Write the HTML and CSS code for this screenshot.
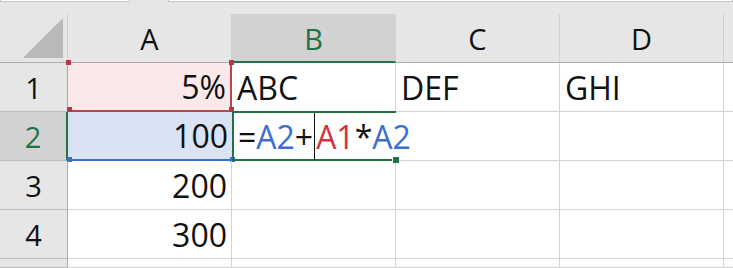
FILE: index.html
```html
<!DOCTYPE html>
<html lang="en">
<head>
    <meta charset="UTF-8">
    <title>sheet</title>
    <link rel="stylesheet" href="styles.css">
</head>
<body>

<div class="topbar">
    <div class="namebox"></div>
    <div class="formulabox"></div>
</div>

<div class="sheet">
    <!-- header row -->
    <div class="corner"><span class="tri"></span></div>
    <div class="colhead">A</div>
    <div class="colhead sel">B</div>
    <div class="colhead">C</div>
    <div class="colhead">D</div>
    <div class="colhead last"></div>

    <!-- row 1 -->
    <div class="rowhead">1</div>
    <div class="cell num ref-red">5%</div>
    <div class="cell">ABC</div>
    <div class="cell">DEF</div>
    <div class="cell">GHI</div>
    <div class="cell"></div>

    <!-- row 2 -->
    <div class="rowhead sel">2</div>
    <div class="cell num ref-blue">100</div>
    <div class="cell active"><span>=</span><span class="blue">A2</span><span>+</span><i class="caret"></i><span class="red">A1</span><span>*</span><span class="blue">A2</span></div>
    <div class="cell"></div>
    <div class="cell"></div>
    <div class="cell"></div>

    <!-- row 3 -->
    <div class="rowhead">3</div>
    <div class="cell num">200</div>
    <div class="cell"></div>
    <div class="cell"></div>
    <div class="cell"></div>
    <div class="cell"></div>

    <!-- row 4 -->
    <div class="rowhead">4</div>
    <div class="cell num">300</div>
    <div class="cell"></div>
    <div class="cell"></div>
    <div class="cell"></div>
    <div class="cell"></div>

    <!-- row 5 (cut off) -->
    <div class="rowhead"></div>
    <div class="cell"></div>
    <div class="cell"></div>
    <div class="cell"></div>
    <div class="cell"></div>
    <div class="cell"></div>
</div>

</body>
</html>
```

FILE: styles.css
```css
* {
    box-sizing: border-box;
}

body {
    margin: 0;
    height: 268px;
    background: #fff;
    font-family: "Open Sans", "Noto Sans", sans-serif;
    font-size: 32px;
    color: #111;
    overflow: hidden;
}

.topbar {
    height: 14px;
    background: #e6e6e6;
    display: flex;
    gap: 38px;
}

.topbar .namebox,
.topbar .formulabox {
    height: 2px;
    background: #fff;
    border: 1px solid #c6c6c6;
    border-top: 0;
}

.topbar .namebox {
    width: 130px;
}

.topbar .formulabox {
    flex: 1;
}

.sheet {
    display: grid;
    grid-template-columns: 68px 164px 164px 164px 164px 1fr;
    grid-template-rows: 49px 49px 49px 49px 49px 9px;
}

.corner {
    background: #e6e6e6;
    border-bottom: 1px solid #ababab;
    border-right: 1px solid #d0d0d0;
    position: relative;
}

.corner .tri {
    position: absolute;
    right: 4px;
    bottom: 4px;
    width: 0;
    height: 0;
    border-style: solid;
    border-width: 0 0 40px 40px;
    border-color: transparent transparent #b9b9b9 transparent;
}

.colhead,
.rowhead {
    font-size: 29px;
    background: #e6e6e6;
    display: flex;
    align-items: center;
    justify-content: center;
}

.colhead {
    border-bottom: 1px solid #ababab;
    border-right: 1px solid #d0d0d0;
    padding-top: 1px;
}

.colhead.sel {
    background: #d2d2d2;
    color: #217346;
    border-bottom: 2px solid #217346;
}

.colhead.last {
    border-right: 0;
}

.rowhead {
    border-bottom: 1px solid #bdbdbd;
    border-right: 1px solid #ababab;
}

.rowhead.sel {
    background: #d2d2d2;
    color: #217346;
    border-right: 2px solid #217346;
}

.cell {
    border-bottom: 1px solid #d4d4d4;
    border-right: 1px solid #d4d4d4;
    display: flex;
    align-items: center;
    padding: 0 5px;
    white-space: nowrap;
    position: relative;
}

.cell.num {
    justify-content: flex-end;
    padding-right: 4px;
}

.ref-red {
    background: #fbe9e9;
    border-bottom: 2px solid #b5474f;
    border-right: 2px solid #b5474f;
}

.ref-red::before,
.ref-red::after {
    content: "";
    position: absolute;
    width: 5px;
    height: 5px;
    background: #b5374a;
}

.ref-red::before {
    left: -2px;
    top: -3px;
}

.ref-red::after {
    right: -4px;
    top: -3px;
    box-shadow: 0 47px 0 #b5374a, -162px 47px 0 #b5374a;
}

.ref-blue {
    background: #d9e3f3;
    border-bottom: 2px solid #3a6fcf;
    border-right: 0;
}

.ref-blue::before,
.ref-blue::after {
    content: "";
    position: absolute;
    width: 5px;
    height: 5px;
    background: #3a6fcf;
    bottom: -3px;
}

.ref-blue::before {
    left: -1px;
}

.ref-blue::after {
    right: -3px;
}

/* cell in edit mode: text runs over into C2, so no right edge */
.active {
    border: 2px solid #217346;
    border-right: 0;
    margin-top: -1px;
    padding-left: 4px;
    z-index: 1;
}

.active::after {
    content: "";
    position: absolute;
    right: -3px;
    bottom: -4px;
    width: 6px;
    height: 6px;
    background: #217346;
    border: 1px solid #fff;
    border-width: 1px 0 0 1px;
}

.blue {
    color: #3a6fd0;
}

.red {
    color: #d0343c;
}

.caret {
    display: block;
    flex: none;
    width: 1px;
    height: 47px;
    margin: 0 1px;
    background: #111;
}
```
